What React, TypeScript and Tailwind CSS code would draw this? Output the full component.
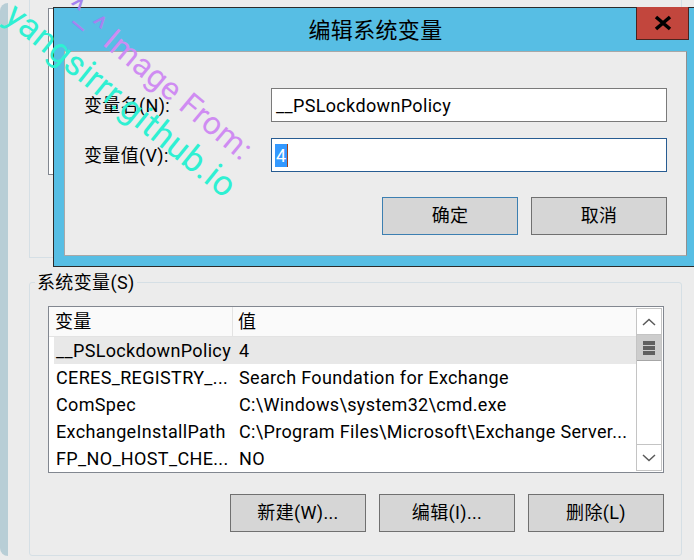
import React from "react";

const font = 'Roboto, "Noto Sans CJK SC", sans-serif';

interface EnvVar {
  name: string;
  value: string;
}

const systemVars: EnvVar[] = [
  { name: "__PSLockdownPolicy", value: "4" },
  { name: "CERES_REGISTRY_...", value: "Search Foundation for Exchange" },
  { name: "ComSpec", value: "C:\\Windows\\system32\\cmd.exe" },
  { name: "ExchangeInstallPath", value: "C:\\Program Files\\Microsoft\\Exchange Server..." },
  { name: "FP_NO_HOST_CHE...", value: "NO" },
];

function WinButton({ label, focused }: { label: string; focused?: boolean }) {
  return (
    <button
      className={`w-[136px] h-[38px] bg-[#d6d6d6] border text-[18px] text-black leading-none ${
        focused ? "border-[#3c7fb1]" : "border-[#707070]"
      }`}
    >
      {label}
    </button>
  );
}

function ScrollBar() {
  return (
    <div className="w-[26px] my-[1px] mr-[1px] border border-[#c4c4c4] flex flex-col bg-white">
      <div className="h-[26px] border-b border-[#c4c4c4] flex items-center justify-center">
        <svg width="14" height="8" viewBox="0 0 14 8">
          <polyline points="1,7 7,1.5 13,7" fill="none" stroke="#5a5a5a" strokeWidth="1.5" />
        </svg>
      </div>
      <div className="h-[26px] bg-[#cdcdcd] border-b border-[#a6a6a6] flex items-center justify-center">
        <svg width="12" height="14" viewBox="0 0 12 14">
          <rect x="0" y="0" width="12" height="4" fill="#606060" />
          <rect x="0" y="5" width="12" height="4" fill="#606060" />
          <rect x="0" y="10" width="12" height="4" fill="#606060" />
        </svg>
      </div>
      <div className="flex-1" />
      <div className="h-[26px] border-t border-[#c4c4c4] flex items-center justify-center">
        <svg width="14" height="8" viewBox="0 0 14 8">
          <polyline points="1,1 7,6.5 13,1" fill="none" stroke="#5a5a5a" strokeWidth="1.5" />
        </svg>
      </div>
    </div>
  );
}

function EditDialog() {
  return (
    <div className="absolute left-[53px] top-[7px] w-[645px] h-[260px] border border-[#2b2b2b] bg-[#57bee4] flex flex-col px-[10px] pb-[10px]">
      <div className="relative h-[43px] flex items-center justify-center">
        <span className="text-[22px] text-black leading-none pt-[2px]">编辑系统变量</span>
        <div className="absolute right-[-2px] top-[-1px] w-[53px] h-[33px] bg-[#c2463d] border border-[#4a2420] border-t-0 flex items-center justify-center">
          <svg width="20" height="16" viewBox="0 0 20 16">
            <path d="M3 2 L17 14 M17 2 L3 14" stroke="#000" strokeWidth="3.6" />
          </svg>
        </div>
      </div>
      <div className="flex-1 bg-[#ececec] border border-[#a8a8a8] border-r-[#8f8f8f] px-[19px] pt-[36px]">
        <div className="grid grid-cols-[187px_1fr] gap-y-[16px] items-center">
          <span className="text-[18px] text-black">变量名(N):</span>
          <div className="h-[34px] bg-white border border-[#7a7a7a] flex items-center pl-[4px] text-[18px] text-black">
            __PSLockdownPolicy
          </div>
          <span className="text-[18px] text-black">变量值(V):</span>
          <div className="h-[34px] bg-white border border-[#275c92] flex items-center pl-[3px] text-[18px]">
            <span className="bg-[#3399ff] text-white px-[1px] leading-[23px]">4</span>
            <span className="w-[1px] h-[23px] bg-[#a0401a]" />
          </div>
        </div>
        <div className="flex justify-end gap-[13px] mt-[25px]">
          <WinButton label="确定" focused />
          <WinButton label="取消" />
        </div>
      </div>
    </div>
  );
}

function Watermark() {
  return (
    <>
      <div className="absolute left-[80px] top-[-9px] text-[32px] leading-none whitespace-nowrap text-[#cf8cf2] origin-top-left rotate-[40deg] pointer-events-none">
        <span className="text-[#a583f0]">^_^</span> Image From:
      </div>
      <div className="absolute left-[21px] top-[-3px] text-[35px] leading-none whitespace-nowrap text-[#2ff0d2] origin-top-left rotate-[39deg] pointer-events-none">
        yangsirrr.github.io
      </div>
    </>
  );
}

export default function App() {
  return (
    <div
      className="relative w-[694px] h-[560px] overflow-hidden bg-[#ececec] flex tracking-[0.35px]"
      style={{ fontFamily: font }}
    >
      <div className="w-[8px] mt-[3px] mb-[4px] bg-[#b8ced6] rounded-l-[9px]" />
      <div className="flex-1 pl-[21px] pr-[12px]">
        {/* user variables group, mostly hidden behind the dialog */}
        <div className="h-[258px] border-x border-b border-[#d5dfe5] pt-[8px] pl-[18px] pr-[17px]">
          <div className="h-[167px] bg-white border border-[#828790]" />
        </div>

        <fieldset className="mt-[14px] border border-[#d5dfe5] rounded-[3px]">
          <legend className="ml-[5px] px-[2px] text-[18px] leading-[21px] text-black">系统变量(S)</legend>
          <div className="pl-[18px] pr-[17px] pb-[23px]">
            <div className="mt-[13px] h-[167px] bg-white border border-[#828790] flex">
              <div className="flex-1 flex flex-col">
                <div className="h-[30px] bg-[#fafafa] border-b border-[#e3e3e3] flex text-[18px] text-black">
                  <div className="w-[184px] border-r border-[#e3e3e3] pl-[6px] flex items-center">变量</div>
                  <div className="pl-[5px] flex items-center">值</div>
                </div>
                {systemVars.map((v, i) => (
                  <div
                    key={v.name}
                    className={`ml-[5px] h-[27px] flex items-center text-[18px] text-black whitespace-nowrap ${
                      i === 0 ? "bg-[#e8e8e8]" : ""
                    }`}
                  >
                    <div className="w-[183px] pl-[2px] overflow-hidden">{v.name}</div>
                    <div className="pl-[2px]">{v.value}</div>
                  </div>
                ))}
              </div>
              <ScrollBar />
            </div>
            <div className="flex justify-end gap-[13px] mt-[21px]">
              <WinButton label="新建(W)..." />
              <WinButton label="编辑(I)..." />
              <WinButton label="删除(L)" />
            </div>
          </div>
        </fieldset>
      </div>

      <EditDialog />
      <Watermark />
    </div>
  );
}
